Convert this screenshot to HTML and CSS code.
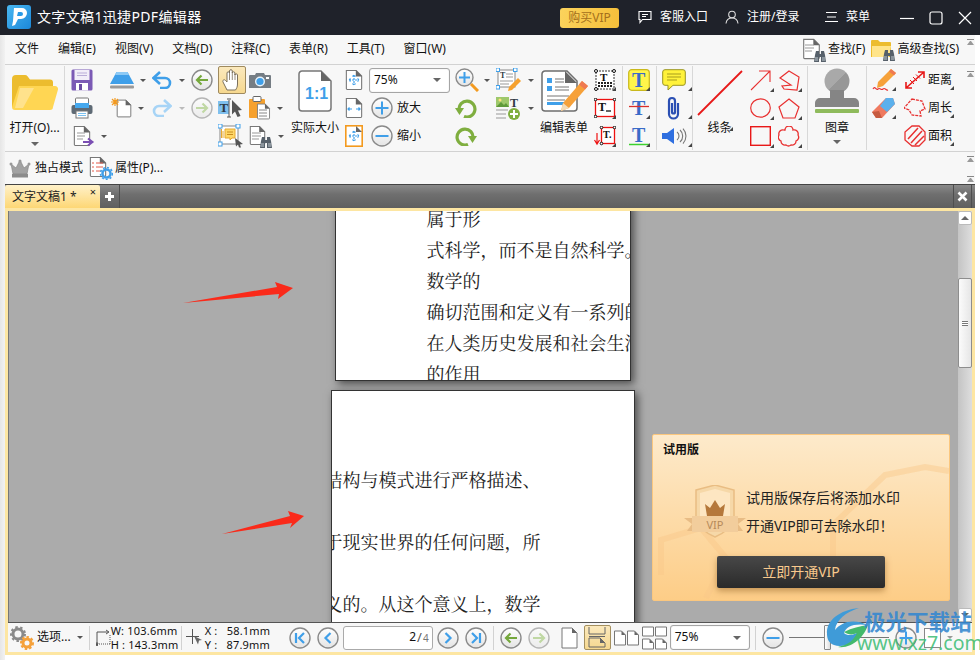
FILE: index.html
```html
<!DOCTYPE html>
<html lang="zh-CN">
<head>
<meta charset="utf-8">
<title>文字文稿1迅捷PDF编辑器</title>
<link rel="stylesheet" href="styles.css">
</head>
<body>
<svg class="sprite" width="0" height="0">
  <defs>
    <linearGradient id="rg" x1="0" y1="0" x2="0" y2="1"><stop offset="0" stop-color="#fff"/><stop offset="1" stop-color="#e4e4e4"/></linearGradient>
    <linearGradient id="stampg" x1="0" y1="0" x2="1" y2="1"><stop offset=".5" stop-color="#a9a9a9"/><stop offset=".5" stop-color="#979797"/></linearGradient>
    <symbol id="ring" viewBox="0 0 22 22"><circle cx="11" cy="11" r="10" fill="url(#rg)" stroke="#8a8a8a" stroke-width="1.4"/></symbol>
    <symbol id="page" viewBox="0 0 20 24"><path d="M1.5 1.5h11l6 6v14a1 1 0 0 1-1 1h-15a1 1 0 0 1-1-1z" fill="#fff" stroke="#777" stroke-width="1.2"/><path d="M12 1l7 7h-7z" fill="#666"/></symbol>
    <symbol id="binoc" viewBox="0 0 12 12"><path d="M1 5l1-4h3v3h2V1h3l1 4 1 7H7V7H5v5H0z" fill="#56606a"/><rect x="1" y="7" width="3" height="4" fill="#8a949c"/><rect x="8" y="7" width="3" height="4" fill="#8a949c"/></symbol>
  </defs>
</svg>

<header class="titlebar">
  <svg class="logo" width="24" height="24" viewBox="0 0 24 24"><defs><linearGradient id="lg" x1="0" y1="0" x2="1" y2="1"><stop offset="0" stop-color="#4ab8f2"/><stop offset="1" stop-color="#1b87d8"/></linearGradient></defs><rect width="24" height="24" rx="3" fill="url(#lg)"/><path d="M7 3h8a5 5 0 0 1 5 5 6 6 0 0 1-6 6h-3l-3 6-3 1 1-5z" fill="#fff"/><path d="M11 7h3a2 2 0 0 1 0 4h-4z" fill="#2a9ae6"/></svg>
  <span class="doc-title">文字文稿1迅捷PDF编辑器</span>
  <span class="vip-btn">购买VIP</span>
  <span class="tb-item tb-service"><svg width="14" height="14" viewBox="0 0 14 14"><path d="M1 1.5h12v8H4.5L2 12.5v-3H1z" fill="none" stroke="#fff" stroke-width="1.1"/><path d="M4 4.5h6M4 6.5h4" stroke="#fff"/></svg>客服入口</span>
  <span class="tb-item tb-user"><svg width="14" height="14" viewBox="0 0 14 14"><circle cx="7" cy="4.5" r="3.3" fill="none" stroke="#ddd" stroke-width="1.1"/><path d="M1 13.5c.5-4 3-5.500 6-5.500s5.500 1.500 6 5.500" fill="none" stroke="#ddd" stroke-width="1.1"/></svg>注册/登录</span>
  <span class="tb-item tb-menu"><svg width="13" height="12" viewBox="0 0 13 12"><path d="M1 1.500h11M2 6h9M0 10.500h13" stroke="#fff" stroke-width="1.100"/></svg>菜单</span>
  <span class="win-btns">
    <svg width="15" height="14" viewBox="0 0 15 14"><path d="M1 7.500h14" stroke="#fff" stroke-width="1.200"/></svg>
    <svg width="14" height="14" viewBox="0 0 14 14"><rect x="1" y="1" width="12" height="12" rx="2" fill="none" stroke="#fff" stroke-width="1.200"/></svg>
    <svg width="14" height="14" viewBox="0 0 14 14"><path d="M1 1l12 12M13 1L1 13" stroke="#fff" stroke-width="1.200"/></svg>
  </span>
</header>

<div class="app">
  <nav class="menubar">
    <span>文件</span><span>编辑(E)</span><span>视图(V)</span><span>文档(D)</span><span>注释(C)</span><span>表单(R)</span><span>工具(T)</span><span>窗口(W)</span>
    <span class="find find-first">
      <svg width="24" height="24" viewBox="0 0 24 24"><use href="#page" x="0" y="0" width="19" height="22"/><path d="M3 7h9M3 10h9M3 13h7" stroke="#999"/><use href="#binoc" x="12" y="12" width="12" height="12"/></svg>查找(F)
    </span>
    <span class="find">
      <svg width="24" height="22" viewBox="0 0 24 22"><path d="M0 2a1 1 0 0 1 1-1h6l2 2h10a1 1 0 0 1 1 1v14H0z" fill="#ecbc2e"/><path d="M1 7h19l-2 11H1z" fill="#ffe48a"/><use href="#binoc" x="12" y="10" width="12" height="12"/></svg>高级查找(S)
    </span>
    <i class="collapse"></i>
  </nav>

  <section class="ribbon">
    <div class="col c-open sep">
      <svg class="mt8" width="46" height="36" viewBox="0 0 46 36"><path d="M0 5a4 4 0 0 1 4-4h9a3 3 0 0 1 2.500 1.300L18 5.500h20a3 3 0 0 1 3 3V33H0z" fill="#ecbc2e"/><path d="M7 12h36a3 3 0 0 1 3 3.500L41 33a3 3 0 0 1-3 3H3a3 3 0 0 1-3-3z" fill="#ffd653"/><path d="M8 14h14L11 34H3z" fill="#ffe28c"/></svg>
      <span class="lbl l-open">打开(O)...</span>
      <i class="caret"></i>
    </div>

    <div class="col c-file">
      <div class="r"><svg width="22" height="22" viewBox="0 0 22 22"><rect x=".5" y=".5" width="21" height="21" rx="1.500" fill="#7b5ab5"/><rect x="3.500" y="1" width="15" height="10" fill="#f1eef8"/><path d="M6 4h10M6 6.500h10" stroke="#b9add8"/><rect x="5" y="14" width="12" height="7.500" fill="#fff"/><rect x="8" y="15" width="3" height="6" fill="#6a4ba3"/></svg></div>
      <div class="r"><svg width="22" height="22" viewBox="0 0 22 22"><rect x="4.500" y="1" width="13" height="8" rx="1" fill="#fff" stroke="#777"/><rect x="0.500" y="8" width="21" height="9" rx="2" fill="#5e6a75"/><rect x="4" y="6" width="14" height="5" fill="#45a8ee"/><rect x="5" y="14" width="12" height="7" fill="#fff" stroke="#777"/><path d="M7 16.500h8M7 18.500h8" stroke="#7cc1ef"/></svg></div>
      <div class="r r-doc"><svg width="22" height="22" viewBox="0 0 22 22"><use href="#page" x="0" y="0" width="18" height="22"/><path d="M4 8h8M4 11h8M4 14h6" stroke="#999"/><path d="M10 17h8M15 13.500l4.500 3.500-4.500 3.500" fill="none" stroke="#7b4fb3" stroke-width="2"/></svg><i class="caret s"></i></div>
    </div>

    <div class="col c-disk">
      <div class="r"><svg width="24" height="18" viewBox="0 0 24 18"><path d="M6.500 1h11L24 13H0z" fill="#3f9fe9"/><path d="M6.500 1h11l1.500 3H5z" fill="#8cc9f5"/><rect y="14.500" width="24" height="3" rx="1" fill="#9a9a9a"/></svg><i class="caret s"></i></div>
      <div class="r"><svg width="22" height="22" viewBox="0 0 22 22"><use href="#page" x="6" y="1" width="16" height="21"/><path d="M5 1v8M1 5h8M2 2l6 6M8 2L2 8" stroke="#f39a1f" stroke-width="1.200"/></svg><i class="caret s"></i></div>
    </div>

    <div class="col c-undo">
      <div class="r"><svg width="20" height="18" viewBox="0 0 20 18"><path d="M2 7h11a5 5 0 0 1 0 10H8" fill="none" stroke="#3f9fe9" stroke-width="2.600"/><path d="M8 1L1.500 7 8 13" fill="none" stroke="#3f9fe9" stroke-width="2.600"/></svg><i class="caret s c2"></i></div>
      <div class="r"><svg width="20" height="18" viewBox="0 0 20 18"><path d="M18 7H7a5 5 0 0 0 0 10h5" fill="none" stroke="#a7d4f6" stroke-width="2.600"/><path d="M12 1l6.500 6L12 13" fill="none" stroke="#a7d4f6" stroke-width="2.600"/></svg><i class="caret s c2 dim"></i></div>
    </div>

    <div class="col c-nav">
      <div class="r"><svg width="22" height="22" viewBox="0 0 22 22"><use href="#ring"/><path d="M17 11H6M10.500 6.500L6 11l4.500 4.500" fill="none" stroke="#75a83c" stroke-width="2.200"/></svg></div>
      <div class="r"><svg width="22" height="22" viewBox="0 0 22 22"><use href="#ring" opacity=".6"/><path d="M5 11h11M11.500 6.500L16 11l-4.500 4.500" fill="none" stroke="#c0d8a4" stroke-width="2.200"/></svg></div>
    </div>

    <div class="col c-hand">
      <div class="r hand-on"><svg width="20" height="24" viewBox="0 0 20 24"><path d="M5 22l-4-8c-.8-2 1.500-3 2.500-1.500L5 14V5c0-1.600 2.500-1.600 2.500 0V3c0-1.800 2.800-1.800 2.800 0v2c0-1.600 2.600-1.600 2.600 0v2c0-1.500 2.600-1.500 2.600 0v9c0 3-1 4.500-2 6z" fill="#fff" stroke="#7b705c" stroke-width="1"/><path d="M7.500 5v7M10.300 4v8M13 6v6" stroke="#7b705c" stroke-width=".8"/></svg></div>
      <div class="r"><svg width="25" height="23" viewBox="0 0 25 23"><rect y="4" width="11" height="13" fill="#7fc0ee"/><text class="svg-t" x="1.500" y="15" font-size="13">T</text><path d="M11 3v17" stroke="#555"/><path d="M9 2h4M9 20h4" stroke="#555"/><path d="M14 3l10 10-4 .5 2.500 5.500-3 1-2.500-5.500-3 3z" fill="#555"/></svg></div>
      <div class="r"><svg width="25" height="24" viewBox="0 0 25 24"><rect x="2" y="2" width="18" height="18" fill="#fff" stroke="#888"/><path d="M7 5h10v9h-3l-2 2v-2H7z" fill="#ffd868" stroke="#e6a932"/><path d="M5 7v7M3.500 5v9" stroke="#e6a932"/><path d="M9 8h6M9 10.500h6" stroke="#c88c20"/><rect x="0" y="0" width="4" height="4" fill="#fff" stroke="#3f9fe9"/><rect x="18" y="0" width="4" height="4" fill="#fff" stroke="#3f9fe9"/><rect x="0" y="18" width="4" height="4" fill="#fff" stroke="#3f9fe9"/><path d="M17 14l8 6-3 .5 1 3h-2l-1-3-2 2z" fill="#555"/></svg></div>
    </div>

    <div class="col c-cam">
      <div class="r"><svg width="22" height="17" viewBox="0 0 22 17"><path d="M1 3h5l1-2h8l1 2h5a1 1 0 0 1 1 1v12H0V4a1 1 0 0 1 1-1z" fill="#757d84"/><circle cx="11" cy="9.500" r="5" fill="#e7f3fc"/><circle cx="11" cy="9.500" r="3.600" fill="#3f9fe9"/><rect x="17" y="5" width="3" height="2" fill="#fff"/></svg></div>
      <div class="r"><svg width="22" height="24" viewBox="0 0 22 24"><rect y="3" width="16" height="19" rx="1" fill="#f6a12e"/><rect x="4" y="0.500" width="8" height="5" rx="1" fill="#fff" stroke="#666"/><use href="#page" x="7" y="7" width="15" height="17"/><path d="M10 14h8M10 17h8M10 20h8" stroke="#888"/></svg><i class="caret s"></i></div>
      <div class="r"><svg width="23" height="23" viewBox="0 0 23 23"><use href="#page" x="0" y="0" width="17" height="21"/><path d="M3 8h9M3 11h9M3 14h7" stroke="#999"/><use href="#binoc" x="11" y="11" width="12" height="12"/></svg><i class="caret s"></i></div>
    </div>

    <div class="col c-tall c-actual">
      <svg class="mt5" width="34" height="42" viewBox="0 0 34 42"><path d="M4 1h19l10 10v27a3 3 0 0 1-3 3H4a3 3 0 0 1-3-3V4a3 3 0 0 1 3-3z" fill="#fff" stroke="#777" stroke-width="1.500"/><path d="M23 1l10 10H23z" fill="#666"/><text class="svg-one" x="7" y="29" font-size="16">1:1</text></svg>
      <span class="lbl">实际大小</span>
    </div>

    <div class="col c-fit">
      <div class="r"><svg width="18" height="22" viewBox="0 0 18 22"><use href="#page" width="18" height="22"/><path d="M9 6v10M4 11h10M7.500 7.500L9 6l1.500 1.500M7.500 14.500L9 16l1.500-1.500M5.500 9.500L4 11l1.500 1.500M12.500 9.500L14 11l-1.500 1.500" fill="none" stroke="#3f9fe9" stroke-width="1.200" stroke-dasharray="2 1"/></svg></div>
      <div class="r"><svg width="18" height="22" viewBox="0 0 18 22"><use href="#page" width="18" height="22"/><path d="M3 12h4M11 12h4M4.500 10.500L3 12l1.500 1.500M13.500 10.500L15 12l-1.500 1.500" fill="none" stroke="#3f9fe9" stroke-width="1.200"/></svg></div>
      <div class="r"><svg width="18" height="22" viewBox="0 0 18 22"><rect x=".8" y=".8" width="16.400" height="20.400" fill="#fff" stroke="#f39a1f" stroke-width="1.600"/><path d="M11 1l6 6h-6z" fill="#666"/><path d="M9 6v10M4 11h10M7.500 7.500L9 6l1.500 1.500M7.500 14.500L9 16l1.500-1.500M5.500 9.500L4 11l1.500 1.500M12.500 9.500L14 11l-1.500 1.500" fill="none" stroke="#3f9fe9" stroke-width="1.200" stroke-dasharray="2 1"/></svg></div>
    </div>

    <div class="col c-zoom">
      <div class="r"><span class="combo combo-top">75%<i class="caret"></i></span></div>
      <div class="r lblrow"><svg width="22" height="22" viewBox="0 0 22 22"><use href="#ring"/><path d="M11 4.500v13M4.500 11h13" stroke="#3f9fe9" stroke-width="2"/></svg>放大</div>
      <div class="r lblrow"><svg width="22" height="22" viewBox="0 0 22 22"><use href="#ring"/><path d="M4.500 11h13" stroke="#3f9fe9" stroke-width="2"/></svg>缩小</div>
    </div>

    <div class="col c-mag">
      <div class="r"><svg width="24" height="24" viewBox="0 0 24 24"><circle cx="9.500" cy="9.500" r="8.500" fill="url(#rg)" stroke="#8a8a8a" stroke-width="1.400"/><path d="M9.500 4v11M4 9.500h11" stroke="#3f9fe9" stroke-width="2"/><path d="M16 16l7 7" stroke="#f39a1f" stroke-width="3"/></svg><i class="caret s"></i></div>
      <div class="r"><svg width="22" height="20" viewBox="0 0 22 20"><path d="M4 12a8 8 0 1 1 5 6.500" fill="none" stroke="#7fae3f" stroke-width="3.200"/><path d="M0 10h9l-4.500 7z" fill="#7fae3f"/></svg></div>
      <div class="r"><svg width="22" height="20" viewBox="0 0 22 20"><path d="M18 12a8 8 0 1 0-5 6.500" fill="none" stroke="#7fae3f" stroke-width="3.200"/><path d="M22 10h-9l4.500 7z" fill="#7fae3f"/></svg></div>
    </div>

    <div class="col c-ins">
      <div class="r"><svg width="26" height="24" viewBox="0 0 26 24"><rect x="2" y="2" width="17" height="17" fill="#fff" stroke="#888"/><text class="svg-t" x="4" y="10" font-size="8">T</text><path d="M10 6h7M10 9h7M4 13h13M4 16h9" stroke="#999"/><rect x="0" y="0" width="3.500" height="3.500" fill="#fff" stroke="#3f9fe9"/><rect x="17.500" y="0" width="3.500" height="3.500" fill="#fff" stroke="#3f9fe9"/><rect x="0" y="17.500" width="3.500" height="3.500" fill="#fff" stroke="#3f9fe9"/><path d="M22 10l3 3-9 9-4 1 1-4z" fill="#f6a12e"/></svg><i class="caret s"></i></div>
      <div class="r"><svg width="26" height="24" viewBox="0 0 26 24"><rect y="1" width="13" height="10" fill="#9ec86b"/><path d="M0 11l5-5 3 3 2-2 3 4z" fill="#5f9a3a"/><circle cx="4" cy="4" r="1.500" fill="#ffe27a"/><text class="svg-t" x="14" y="11" font-size="12">T</text><path d="M0 14h12M0 18h10M0 22h10" stroke="#999"/><circle cx="18" cy="18" r="6" fill="#7fae3f"/><path d="M18 14v8M14 18h8" stroke="#fff" stroke-width="2"/></svg><i class="caret s"></i></div>
    </div>

    <div class="col c-tall c-form">
      <svg class="mt5" width="47" height="42" viewBox="0 0 47 42"><path d="M4 1h22l10 10v27a3 3 0 0 1-3 3H4a3 3 0 0 1-3-3V4a3 3 0 0 1 3-3z" fill="#fff" stroke="#6e6e6e" stroke-width="1.500"/><path d="M24 1l12 12H24z" fill="#666"/><rect x="6" y="8" width="5" height="5" fill="#3f9fe9"/><rect x="6" y="16" width="5" height="5" fill="#3f9fe9"/><path d="M14 9h9M14 12h9M14 17h14M14 20h14M6 26h22M6 30h18" stroke="#777" stroke-width="1.200"/><rect x="6" y="32" width="17" height="3" fill="#3f9fe9"/><path d="M41 11l6 5-19 22-8 3 2-8z" fill="#f6a13a"/><path d="M41 11l6 5-3 3.500-6-5z" fill="#ef7a52"/><path d="M22 33l6 5-8 3z" fill="#f4dcb8"/></svg>
      <span class="lbl">编辑表单</span>
    </div>

    <div class="col c-field sep">
      <div class="r cor"><svg width="22" height="22" viewBox="0 0 22 22"><rect x="2" y="2" width="18" height="18" fill="#fff" stroke="#333" stroke-dasharray="2 1"/><text class="svg-k" x="6" y="12" font-size="11">T</text><path d="M4 14h14M4 17h14" stroke="#222" stroke-width="2" stroke-dasharray="2 1"/><g fill="#fff" stroke="#111"><circle cx="2" cy="2" r="1.500"/><circle cx="20" cy="2" r="1.500"/><circle cx="2" cy="20" r="1.500"/></g></svg></div>
      <div class="r cor"><svg width="22" height="20" viewBox="0 0 22 20"><rect x="1.500" y="1.500" width="19" height="17" fill="#fff" stroke="#e11" stroke-width="1.300"/><text class="svg-k" x="4" y="13" font-size="12">T</text><path d="M12 13h5" stroke="#111" stroke-width="1.300"/><g fill="#fff" stroke="#111"><circle cx="1.500" cy="1.500" r="1.300"/><circle cx="20.500" cy="1.500" r="1.300"/><circle cx="1.500" cy="18.500" r="1.300"/></g></svg></div>
      <div class="r cor"><svg width="22" height="20" viewBox="0 0 22 20"><rect x="7.500" y="1.500" width="13" height="16" fill="#fff" stroke="#e11" stroke-width="1.300"/><text class="svg-k" x="9" y="12" font-size="10">T.</text><path d="M3 7v11M0.500 14L3 18l2.500-4" fill="none" stroke="#e11" stroke-width="1.200"/><g fill="#fff" stroke="#111"><circle cx="7.500" cy="1.500" r="1.300"/><circle cx="20.500" cy="1.500" r="1.300"/><circle cx="7.500" cy="17.500" r="1.300"/></g></svg></div>
    </div>

    <div class="col c-t sep">
      <div class="r cor"><svg width="22" height="22" viewBox="0 0 22 22"><rect x=".7" y=".7" width="20.600" height="20.600" rx="3" fill="#fff54a" stroke="#c9b81c" stroke-width="1.200"/><text class="svg-bt" x="4" y="18" font-size="20">T</text></svg></div>
      <div class="r cor"><svg width="22" height="20" viewBox="0 0 22 20"><text class="svg-bt" x="4" y="17" font-size="20">T</text><path d="M1 8.500h20" stroke="#d9302a" stroke-width="1.300"/></svg></div>
      <div class="r cor"><svg width="22" height="20" viewBox="0 0 22 20"><text class="svg-bt" x="4" y="16" font-size="20">T</text><path d="M1 18.500h20" stroke="#3cd12e" stroke-width="1.500"/></svg></div>
    </div>

    <div class="col c-note sep">
      <div class="r cor"><svg width="24" height="22" viewBox="0 0 24 22"><path d="M3 .7h18a2.300 2.300 0 0 1 2.300 2.300v11a2.300 2.300 0 0 1-2.300 2.300H11L6 21v-4.700H3A2.300 2.300 0 0 1 .7 14V3A2.300 2.300 0 0 1 3 .7z" fill="#fff23a" stroke="#9a9520" stroke-width="1"/><path d="M5 5h14M5 8h14M5 11h10" stroke="#a79d1c"/></svg></div>
      <div class="r cor"><svg width="14" height="24" viewBox="0 0 14 24"><path d="M11 7v11a4.500 4.500 0 0 1-9 0V5a3 3 0 0 1 6 0v11a1.500 1.500 0 0 1-3 0V7" fill="none" stroke="#2b4fb3" stroke-width="2.200"/></svg></div>
      <div class="r cor"><svg width="25" height="16" viewBox="0 0 25 16"><path d="M0 5h5l7-5v16l-7-5H0z" fill="#2f6fe0"/><path d="M15 4a5 5 0 0 1 0 8M18 2a8 8 0 0 1 0 12M21 0.500a11 11 0 0 1 0 15" fill="none" stroke="#777" stroke-width="1.100"/></svg></div>
    </div>

    <div class="col c-tall c-line">
      <svg class="mt5" width="46" height="46" viewBox="0 0 46 46"><path d="M1 45L45 1" stroke="#e81818" stroke-width="1.800"/></svg>
      <span class="lbl l-line">线条</span><i class="corner c-line-mark"></i>
    </div>

    <div class="col c-s1">
      <div class="r cor"><svg width="21" height="21" viewBox="0 0 21 21"><path d="M1 20L20 1M9 1h11v11" fill="none" stroke="#e83030" stroke-width="1.100"/></svg></div>
      <div class="r cor"><svg width="21" height="20" viewBox="0 0 21 20"><ellipse cx="10.500" cy="10" rx="9.800" ry="9.200" fill="none" stroke="#e83030" stroke-width="1.200"/></svg></div>
      <div class="r cor"><svg width="21" height="20" viewBox="0 0 21 20"><rect x=".7" y=".7" width="19.600" height="18.600" fill="none" stroke="#e81818" stroke-width="1.400"/></svg></div>
    </div>

    <div class="col c-s2 sep">
      <div class="r cor"><svg width="22" height="21" viewBox="0 0 22 21"><path d="M11 1l10 6-2 13-13-1-2-3 9-1-11-7z" fill="none" stroke="#e83030" stroke-width="1.200"/></svg></div>
      <div class="r cor"><svg width="22" height="21" viewBox="0 0 22 21"><path d="M11 1l10 8-4 11H5L1 9z" fill="none" stroke="#e83030" stroke-width="1.200"/></svg></div>
      <div class="r cor"><svg width="22" height="21" viewBox="0 0 22 21"><path d="M7 4a4 4 0 0 1 8 0 4 4 0 0 1 5 5 4 4 0 0 1-2 6 4 4 0 0 1-5 4 4 4 0 0 1-5 0 4 4 0 0 1-5-4 4 4 0 0 1-2-6 4 4 0 0 1 5-5z" fill="none" stroke="#e83030" stroke-width="1.300"/></svg></div>
    </div>

    <div class="col c-tall c-stamp sep">
      <svg class="mt3" width="46" height="46" viewBox="0 0 46 46"><circle cx="23" cy="13" r="12.500" fill="url(#stampg)"/><path d="M16 22h14v8h10a5 5 0 0 1 5 5v4H1v-4a5 5 0 0 1 5-5h10z" fill="#858585"/><rect x="1" y="41" width="44" height="4" rx="1" fill="#8fbb5c"/></svg>
      <span class="lbl l-stamp">图章</span>
      <i class="caret"></i>
    </div>

    <div class="col c-m1">
      <div class="r cor"><svg width="24" height="24" viewBox="0 0 24 24"><path d="M19 1l5 4-13 13-6 2 1-6z" fill="#f6a13a"/><path d="M19 1l5 4-2 2.500-5-4z" fill="#ef7a52"/><path d="M1 21c2-4 3 2 5 0s3 2 5 0 3 2 5 1" fill="none" stroke="#e83030" stroke-width="1.100"/></svg></div>
      <div class="r cor"><svg width="23" height="22" viewBox="0 0 23 22"><path d="M14 1h7l2 6-13 14H4l-4-6z" fill="#ef7a60"/><path d="M14 1h7l2 6-8 8-7-6z" fill="#5bb0ec"/><path d="M0 15l4 6h6l-3-7z" fill="#c65b40"/></svg></div>
    </div>

    <div class="col c-m2">
      <div class="r lblrow cor"><svg width="22" height="20" viewBox="0 0 22 20"><path d="M2 18L20 2M14 2h6v6M2 12v6h6" fill="none" stroke="#e81818" stroke-width="1.600"/><path d="M6 10l4 4M9 7l4 4M12 4.500l4 4" stroke="#e81818"/></svg>距离</div>
      <div class="r lblrow cor"><svg width="22" height="20" viewBox="0 0 22 20"><path d="M8 1l10 2 3 8-5 2 1 5-9-1-3-5-5-2z" fill="none" stroke="#e83030" stroke-width="1.300" stroke-dasharray="3 1"/></svg>周长</div>
      <div class="r lblrow cor"><svg width="22" height="22" viewBox="0 0 22 22"><path d="M8 1h7l6 6v8l-6 6H8l-7-6V7z" fill="none" stroke="#e83030" stroke-width="1.300"/><path d="M4 14L14 3M7 18L18 6M11 20l9-9" stroke="#e83030" stroke-width="1.500"/></svg>面积</div>
    </div>
    <i class="collapse"></i>
  </section>

  <div class="modebar">
    <svg width="22" height="19" viewBox="0 0 22 19"><path d="M2 5l5 4 4-8 4 8 5-4-2 10H4z" fill="#a2a2a2" stroke="#7f7f7f" stroke-width=".6"/><rect x="3" y="15" width="16" height="3.500" fill="#8b8b8b"/><circle cx="11" cy="2" r="1.500" fill="#999"/><circle cx="2" cy="5" r="1.500" fill="#999"/><circle cx="20" cy="5" r="1.500" fill="#999"/></svg>
    <span>独占模式</span>
    <svg width="24" height="24" viewBox="0 0 24 24"><use href="#page" width="18" height="22"/><path d="M3 7h2M7 7h7M3 11h2M7 11h7M3 15h2M7 15h5" stroke="#e25a4a"/><circle cx="17.500" cy="17.500" r="4" fill="none" stroke="#3f9fe9" stroke-width="2.500"/><circle cx="17.500" cy="17.500" r="6" fill="none" stroke="#3f9fe9" stroke-width="1.600" stroke-dasharray="2 2"/></svg>
    <span>属性(P)...</span>
    <span class="mode-cols"><i class="collapse"></i><i class="collapse"></i></span>
  </div>

  <div class="tabbar">
    <div class="tab">文字文稿1 *<span class="tab-x">×</span></div>
    <div class="tab-add"><svg width="11" height="11" viewBox="0 0 11 11"><path d="M5.500 1v9M1 5.500h9" stroke="#fff" stroke-width="3"/></svg></div>
    <div class="tab-close"><svg width="11" height="11" viewBox="0 0 11 11"><path d="M1.500 1.500l8 8M9.500 1.500l-8 8" stroke="#fff" stroke-width="2.600"/></svg></div>
  </div>

  <main class="frame">
    <div class="viewer-row">
      <div class="viewer">
        <article class="pg pg1">
          <p>属于形</p><p>式科学，而不是自然科学。</p><p>数学的</p><p>确切范围和定义有一系列的</p><p>在人类历史发展和社会生活</p><p>的作用</p>
        </article>
        <article class="pg pg2">
          <p>结构与模式进行严格描述、</p><p>于现实世界的任何问题，所</p><p>义的。从这个意义上，数学</p>
        </article>
        <svg class="arrows" width="320" height="340" viewBox="0 0 320 340"><path d="M174 92L268 76L266 71L284 77L269 88L270 83z" fill="#fa2a1a"/><path d="M213 323L281 305L279 300L295 305L281 317L283 312z" fill="#fa2a1a"/></svg>
        <aside class="trial">
          <svg class="trial-bg" width="296" height="165" viewBox="0 0 296 165"><path d="M180 130l0-40 52-50 40-8 24 4M8 140v-35l40-12 25 30-20 40" fill="none" stroke="#f9c88a" stroke-width="6" opacity=".45"/></svg>
          <h2 class="trial-h">试用版</h2>
          <div class="trial-body">
            <svg width="62" height="58" viewBox="0 0 62 58"><path d="M12 5l19-5 19 5v28c0 8-10 15-19 19-9-4-19-11-19-19z" fill="#f6d8a8" stroke="#e9bd83" stroke-width="1.500"/><path d="M16 8l15-4 15 4v24c0 6-8 12-15 15-7-3-15-9-15-15z" fill="#fde6c2"/><path d="M21 19l5 4 5-8 5 8 5-4-2 12H23z" fill="#b5783b"/><path d="M0 33h62l-8 6 5 7H3l5-7z" fill="#e8bc85"/><path d="M8 31h46v16H8z" fill="#f2cd9c"/><text class="vip-mini" x="31" y="44" font-size="11" text-anchor="middle">VIP</text></svg>
            <div class="trial-msg"><p>试用版保存后将添加水印</p><p>开通VIP即可去除水印！</p></div>
          </div>
          <span class="trial-btn">立即开通VIP</span>
        </aside>
      </div>
      <div class="scroll">
        <i class="sb-btn up"></i>
        <div class="sb-thumb"><b></b></div>
        <div class="sb-rest"></div>
        <i class="sb-btn down"></i>
      </div>
    </div>

    <footer class="status">
      <svg class="st-gear" width="24" height="24" viewBox="0 0 24 24"><circle cx="8" cy="8" r="5" fill="none" stroke="#8a8a8a" stroke-width="3"/><circle cx="8" cy="8" r="7" fill="none" stroke="#8a8a8a" stroke-width="2" stroke-dasharray="2.500 2.500"/><circle cx="17" cy="17" r="4" fill="none" stroke="#f5a13a" stroke-width="3"/><circle cx="17" cy="17" r="6" fill="none" stroke="#f5a13a" stroke-width="2" stroke-dasharray="2.500 2"/></svg>
      <span class="st-opt">选项...</span><i class="caret s st-car"></i>
      <i class="st-sep s1"></i>
      <svg class="st-size" width="15" height="18" viewBox="0 0 15 18"><path d="M1 17V3h11M10 1l3 2-3 2M1 17l-1-3h2z" fill="none" stroke="#555"/><path d="M3 15h11M14 15V5" stroke="#555" stroke-dasharray="1 1"/></svg>
      <div class="st-dim"><span>W:&nbsp;103.6mm</span><span>H :&nbsp;143.3mm</span></div>
      <i class="st-sep s2"></i>
      <svg class="st-cross" width="17" height="17" viewBox="0 0 17 17"><path d="M0 7.500h13M6.500 0v15" stroke="#555"/><path d="M8 7l8 4-3 .5-1 4z" fill="#666"/></svg>
      <div class="st-pos"><span>X :&nbsp;&nbsp;&nbsp;58.1mm</span><span>Y :&nbsp;&nbsp;&nbsp;87.9mm</span></div>
      <svg class="nav-first" width="22" height="22" viewBox="0 0 22 22"><use href="#ring"/><path d="M7 6v10M15 6l-5 5 5 5" fill="none" stroke="#3f9fe9" stroke-width="2.200"/></svg>
      <svg class="nav-g6" width="22" height="22" viewBox="0 0 22 22"><use href="#ring"/><path d="M13.500 6l-5 5 5 5" fill="none" stroke="#3f9fe9" stroke-width="2.200"/></svg>
      <div class="page-box"><span class="pn">2</span><span class="ps">/</span><span class="pt">4</span></div>
      <svg class="nav-g4" width="22" height="22" viewBox="0 0 22 22"><use href="#ring"/><path d="M8.500 6l5 5-5 5" fill="none" stroke="#3f9fe9" stroke-width="2.200"/></svg>
      <svg class="nav-g6" width="22" height="22" viewBox="0 0 22 22"><use href="#ring"/><path d="M15 6v10M7 6l5 5-5 5" fill="none" stroke="#3f9fe9" stroke-width="2.200"/></svg>
      <i class="st-sep s3"></i>
      <svg class="nav-back" width="22" height="22" viewBox="0 0 22 22"><use href="#ring"/><path d="M17 11H6M10.500 6.500L6 11l4.500 4.500" fill="none" stroke="#75a83c" stroke-width="2.200"/></svg>
      <svg class="nav-g6" width="22" height="22" viewBox="0 0 22 22"><use href="#ring" opacity=".6"/><path d="M5 11h11M11.500 6.500L16 11l-4.500 4.500" fill="none" stroke="#c0d8a4" stroke-width="2.200"/></svg>
      <svg class="v-single" width="17" height="22" viewBox="0 0 17 22"><path d="M1 1h10l5 5v15H1z" fill="#fff" stroke="#777"/><path d="M11 1l5 5h-5z" fill="#666"/></svg>
      <span class="v-on"><svg width="18" height="21" viewBox="0 0 18 21"><path d="M1 0v7h16V0M1 20v-9h11l5 5v4z" fill="none" stroke="#666"/><path d="M1 9.500h16" stroke="#666"/><path d="M12 11l5 5h-5z" fill="#666"/></svg></span>
      <svg class="v-two" width="25" height="16" viewBox="0 0 25 16"><path d="M.5 1h7l4 4v10H.5zM13.500 1h7l4 4v10h-11z" fill="#fff" stroke="#777"/><path d="M7.500 1l4 4h-4zM20.500 1l4 4h-4z" fill="#666"/></svg>
      <svg class="v-four" width="25" height="24" viewBox="0 0 25 24"><path d="M.5 1h11v9H.5zM13.500 1h11v9h-11zM.5 13h7l4 4v6h-11zM13.500 13h7l4 4v6h-11z" fill="#fff" stroke="#777"/><path d="M7.500 13l4 4h-4zM20.500 13l4 4h-4z" fill="#666"/></svg>
      <span class="combo combo-st">75%<i class="caret"></i></span>
      <i class="st-sep s4"></i>
      <svg class="z-minus" width="22" height="22" viewBox="0 0 22 22"><use href="#ring"/><path d="M4.500 11h13" stroke="#3f9fe9" stroke-width="2"/></svg>
      <div class="slider"><b></b></div>
      <svg class="z-plus" width="22" height="22" viewBox="0 0 22 22"><use href="#ring"/><path d="M11 4.500v13M4.500 11h13" stroke="#3f9fe9" stroke-width="2"/></svg>
      <svg class="z-page" width="17" height="20" viewBox="0 0 17 20"><rect x=".5" y=".5" width="16" height="19" fill="#fff" stroke="#888"/></svg>
      <i class="caret s z-car"></i>
    </footer>
  </main>
</div>

<div class="mark">
  <svg class="mark-logo" width="44" height="44" viewBox="0 0 44 44"><path d="M3 26C2 12 16 2 35 0 22 4 12 12 11 22c6-8 18-12 33-5-14-2-22 1-24 8 4 4 12 2 18-4-3 12-18 20-28 16C5 35 3 31 3 26z" fill="#3f9bd8"/><path d="M20 24c8-4 16-6 24-7-4 12-16 24-30 22 10-2 16-7 19-14-4 2-9 2-13-1z" fill="#43b96c"/></svg>
  <div class="mark-txt"><span class="mark-cn">极光下载站</span><span class="mark-en">www.xz7.com</span></div>
</div>
</body>
</html>
```

FILE: styles.css
```css
* { box-sizing: border-box; }
html, body { margin: 0; padding: 0; }
body {
  width: 980px;
  height: 660px;
  overflow: hidden;
  position: relative;
  background: linear-gradient(90deg, #e6e6e6 0, #f2f2f2 5px, #fff 5px);
  font: 12px/1.2 "Noto Sans", "Noto Sans CJK SC", sans-serif;
  color: #111;
}
i { display: block; font-style: normal; }
p, h2 { margin: 0; }
svg { display: block; flex: none; }
.sprite { position: absolute; }
.svg-t { font-family: "Liberation Serif", serif; font-weight: 700; fill: #2f3a44; }
.svg-k { font-family: "Liberation Serif", serif; font-weight: 700; fill: #111; }
.svg-bt { font-family: "Liberation Serif", serif; font-weight: 700; fill: #3a6bc8; }
.svg-one { font-family: "Liberation Sans", sans-serif; font-weight: 700; fill: #3f9fe9; }

.titlebar {
  height: 35px;
  background: #1f222a;
  display: flex;
  align-items: center;
  color: #fff;
  padding-left: 7px;
}
.logo { margin-right: 6px; margin-top: -1px; }
.doc-title { font-size: 14px; width: 166px; letter-spacing: .35px; margin-right: 357px; white-space: nowrap; }
.vip-btn {
  width: 59px; height: 20px;
  background: linear-gradient(100deg, #fbd35c, #f5bf3a);
  border-radius: 3px;
  color: #a4701c;
  text-align: center;
  line-height: 20px;
  font-size: 12px;
}
.tb-item { display: flex; align-items: center; gap: 8px; white-space: nowrap; font-size: 12px; }
.tb-service { margin-left: 19px; width: 87px; }
.tb-user { width: 100px; }
.tb-menu { gap: 8px; width: 74px; }
.win-btns { display: flex; gap: 15px; align-items: center; }

.app { margin-left: 5px; width: 970px; }

.menubar {
  height: 30px;
  background: #f7f7f7;
  border-bottom: 1px solid #d2d2d2;
  display: flex;
  align-items: center;
  gap: 19px;
  padding-left: 10px;
  position: relative;
}
.find { display: flex; align-items: center; gap: 2px; white-space: nowrap; margin-left: -13px; }
.find-first { margin-left: 337px; }
.collapse {
  width: 7px; height: 7px;
  border-top: 1px solid #888;
  position: absolute;
  right: 1px; top: 4px;
}
.collapse::after {
  content: "";
  display: block;
  margin-top: 1px;
  border: 3.500px solid transparent;
  border-top: 0;
  border-bottom: 4px solid #999;
}

.ribbon {
  height: 87px;
  background: #f7f7f7;
  border-bottom: 1px solid #d2d2d2;
  display: flex;
  padding-top: 1px;
  position: relative;
}
.col { display: flex; flex-direction: column; height: 84px; position: relative; }
.sep { border-right: 1px solid #d8d8d8; }
.r { height: 28px; display: flex; align-items: center; position: relative; }
.c-tall { align-items: center; }
.mt3 { margin-top: 2px; }
.mt5 { margin-top: 4px; }
.mt8 { margin-top: 8px; }
.lbl { white-space: nowrap; line-height: 16px; margin-top: 8px; font-size: 12px; }
.l-open { margin-top: 10px; font-size: 12px; }
.l-stamp { margin-top: 6px; }
.caret {
  width: 0; height: 0;
  border: 4px solid transparent;
  border-bottom: 0;
  border-top: 4px solid #666;
}
.caret.s { border-width: 3px 3px 0; border-top-color: #555; margin-left: 6px; }
.caret.c2 { margin-left: 7px; }
.caret.dim { border-top-color: #bbb; }

.c-open { width: 60px; align-items: center; }
.c-open .caret { margin-top: 6px; }
.c-file { width: 40px; padding-left: 6px; }
.r-doc svg { margin-left: 2px; }
.c-disk { width: 42px; padding-left: 5px; }
.c-undo { width: 40px; padding-left: 5px; }
.c-nav { width: 29px; padding-left: 4px; }
.c-hand { width: 32px; padding-left: 2px; }
.hand-on {
  width: 28px; height: 28px;
  background: linear-gradient(#fbe9bd, #f6d88f);
  border: 1px solid #9f8a5e;
  border-radius: 2px;
  justify-content: center;
}
.c-cam { width: 40px; padding-left: 1px; }
.c-actual { width: 54px; }
.c-fit { width: 24px; padding-left: 3px; }
.c-zoom { width: 87px; padding-left: 3px; }
.combo {
  display: flex; align-items: center; justify-content: space-between;
  background: #fff;
  border: 1px solid #a5a5a5;
  border-radius: 3px;
  font-size: 12px;
  padding: 0 8px 0 4px;
  box-shadow: inset 0 0 1px #bbb;
}
.combo-top { width: 81px; height: 25px; }
.lblrow { gap: 4px; padding-left: 2px; white-space: nowrap; }
.c-mag { width: 40px; padding-left: 2px; }
.c-mag .caret.s { margin-left: 5px; }
.c-ins { width: 44px; padding-left: 3px; }
.c-form { width: 54px; }
.c-field { width: 32px; padding-left: 3px; }
.c-t { width: 34px; padding-left: 5px; }
.c-note { width: 36px; padding-left: 5px; align-items: flex-start; }
.c-note .r { width: 30px; }
.c-note .r:nth-child(2) { padding-left: 5px; }
.c-line { width: 54px; }
.l-line { margin-top: 4px; margin-left: -1px; }
.c-s1 { width: 29px; padding-left: 3px; }
.c-s2 { width: 32px; padding-left: 2px; }
.c-stamp { width: 59px; }
.c-stamp .caret { margin-top: 4px; }
.c-m1 { width: 30px; padding-left: 5px; }
.c-m2 { width: 70px; padding-left: 5px; }
.lblrow.cor { gap: 2px; }
.cor::after, .corner {
  content: "";
  display: block;
  position: absolute;
  width: 0; height: 0;
  border-left: 4px solid transparent;
  border-bottom: 4px solid #444;
  right: 0; bottom: 3px;
}
.c-field .cor::after { right: 6px; }
.c-t .cor::after { right: 6px; }
.c-note .cor::after { right: 0; }
.c-s1 .cor::after { right: 2px; bottom: 2px; }
.c-s2 .cor::after { right: 5px; bottom: 2px; }
.c-m1 .cor::after { right: 1px; }
.c-m2 .cor::after { right: 13px; bottom: 4px; }
.c-line-mark { left: 36px; bottom: 19px; right: auto; }
.ribbon > .collapse { top: 6px; }

.modebar {
  height: 32px;
  background: #f7f7f7;
  display: flex;
  align-items: center;
  padding-left: 4px;
  position: relative;
}
.modebar span { white-space: nowrap; }
.modebar svg:first-child { margin-right: 4px; }
.modebar svg:nth-of-type(2) { margin: 0 2px 0 6px; }
.mode-cols .collapse:first-child { top: 4px; }
.mode-cols .collapse:last-child { top: 24px; }

.tabbar {
  height: 24px;
  background: linear-gradient(#8a8a8a 0, #6f6f6f 40%, #5f5f5f 100%);
  border-top: 1px solid #444;
  display: flex;
  align-items: stretch;
}
.tab {
  width: 95px;
  background: linear-gradient(#fff1c9, #fdd775);
  border-radius: 2px 2px 0 0;
  padding: 2px 0 0 7px;
  line-height: 20px;
  position: relative;
  white-space: nowrap;
  color: #222;
}
.tab-x { position: absolute; right: 4px; top: -3px; font-size: 11px; color: #222; }
.tab-add {
  width: 20px;
  display: flex; align-items: center; justify-content: center;
  border-right: 1px solid #4e4e4e;
}
.tab-close {
  width: 19px;
  margin-left: auto;
  margin-right: 3px;
  display: flex; align-items: center; justify-content: center;
  border-left: 1px solid #4e4e4e;
  border-right: 1px solid #4e4e4e;
}

.frame {
  height: 447px;
  border: 3px solid #fde6a2;
  background: #fff;
  display: flex;
  flex-direction: column;
}
.viewer-row { height: 411px; display: flex; }
.viewer {
  width: 950px;
  background: #ababab;
  border-left: 1px solid #777;
  padding-right: 2px;
  position: relative;
  overflow: hidden;
  display: flex;
  flex-direction: column;
  align-items: center;
}
.pg {
  background: #fff;
  border: 1px solid #333;
  box-shadow: 3px 3px 8px rgba(0, 0, 0, .55);
  overflow: hidden;
  font: 18px/31px "Noto Serif CJK SC", "Noto Sans CJK SC", serif;
  color: #222;
  flex: none;
  white-space: nowrap;
}
.pg1 { width: 296px; height: 178px; border-top: 0; padding: 0 0 0 91px; margin-top: -8px; }
.pg1 p { height: 31px; }
.pg2 { width: 304px; height: 300px; margin-top: 9px; padding: 73px 0 0 0; }
.pg2 p { margin: 0 0 31px -7px; height: 31px; }
.arrows { position: absolute; left: 0; top: 0; }

.trial {
  position: absolute;
  left: 643px; top: 223px;
  width: 298px; height: 167px;
  border: 1px solid #fbc77e;
  border-radius: 2px;
  background: linear-gradient(#fdeacb, #fdcd87);
  overflow: hidden;
}
.trial-bg { position: absolute; left: 0; top: 0; }
.trial-h { position: absolute; left: 10px; top: 8px; font-size: 12px; font-weight: 700; }
.trial-body { position: absolute; left: 31px; top: 50px; display: flex; gap: 0; }
.trial-msg { font-size: 14px; color: #222; line-height: 28px; margin-top: -1px; white-space: nowrap; }
.vip-mini { fill: #b58a5a; font-family: "Noto Sans", sans-serif; }
.trial-btn {
  position: absolute;
  left: 64px; top: 121px;
  width: 168px; height: 32px;
  background: linear-gradient(#484848, #2a2a2a);
  color: #f8c98d;
  text-align: center;
  line-height: 32px;
  font-size: 14px;
  border-radius: 2px;
  box-shadow: 0 3px 6px rgba(140, 90, 30, .5);
}

.scroll {
  width: 14px;
  background: linear-gradient(90deg, #c4c4c4, #dedede);
  display: flex;
  flex-direction: column;
}
.sb-btn {
  height: 14px; flex: none;
  background: #fff;
  border: 1px solid #bbb;
  border-radius: 2px;
  display: flex; align-items: center; justify-content: center;
}
.sb-btn.up::after { content: ""; border: 4px solid transparent; border-top: 0; border-bottom: 4px solid #666; }
.sb-btn.down::after { content: ""; border: 4px solid transparent; border-bottom: 0; border-top: 4px solid #666; }
.sb-thumb {
  height: 90px; margin-top: 53px; flex: none;
  background: linear-gradient(90deg, #fbfbfb, #e6e6e6);
  border: 1px solid #8d8d8d;
  border-radius: 2px;
  display: flex; align-items: center; justify-content: center;
}
.sb-thumb b { width: 6px; height: 5px; border-top: 1px solid #777; border-bottom: 1px solid #777; background: linear-gradient(#fff 40%, #777 40% 60%, #fff 60%); }
.sb-rest { flex: 1; }

.status {
  height: 30px;
  background: #f7f7f7;
  border-top: 1px solid #555;
  display: flex;
  align-items: center;
  padding-left: 2px;
  font-size: 11px;
}
.st-opt { margin-left: 3px; font-size: 12px; white-space: nowrap; }
.st-car { margin-left: 6px; }
.st-sep { width: 1px; height: 24px; background: #d2d2d2; flex: none; }
.s1 { margin-left: 6px; }
.st-size { margin-left: 6px; }
.st-dim, .st-pos { display: flex; flex-direction: column; line-height: 14px; letter-spacing: .2px; white-space: nowrap; }
.st-dim { width: 70px; }
.st-cross { margin-left: 4px; }
.st-pos { width: 84px; margin-left: 2px; }
.nav-g6 { margin-left: 6px; }
.nav-g4 { margin-left: 4px; }
.page-box {
  width: 90px; height: 24px; margin-left: 4px;
  background: #fff;
  border: 1px solid #aaa;
  border-radius: 3px;
  display: flex; align-items: center; justify-content: flex-end;
  padding-right: 3px;
  font-size: 12px;
}
.ps { color: #555; margin: 0 1px; font-size: 13px; }
.pt { color: #777; font-size: 10px; }
.s3 { margin-left: 6px; }
.nav-back { margin-left: 6px; }
.v-single { margin-left: 11px; }
.v-on {
  width: 27px; height: 25px; margin-left: 6px;
  background: linear-gradient(#fbe9bd, #f6d88f);
  border: 1px solid #a5905f;
  border-radius: 2px;
  display: flex; align-items: center; justify-content: center;
}
.v-two { margin-left: 3px; }
.v-four { margin-left: 3px; }
.combo-st { width: 80px; height: 25px; margin-left: 3px; }
.s4 { margin-left: 5px; }
.z-minus { margin-left: 6px; }
.slider { width: 100px; height: 1px; background: #777; margin-left: 5px; position: relative; }
.slider b { position: absolute; left: 35px; top: -12px; width: 7px; height: 25px; background: linear-gradient(90deg, #fff, #ddd); border: 1px solid #888; border-radius: 1px; }
.z-plus { margin-left: 6px; }
.z-page { margin-left: 7px; }
.z-car { margin-left: 12px; border-top-color: #999 !important; }

.mark {
  position: absolute;
  left: 824px; top: 608px;
  display: flex;
  pointer-events: none;
}
.mark-txt { display: flex; flex-direction: column; margin-left: -4px; white-space: nowrap; }
.mark-cn { font: 700 21.500px/26px "Noto Sans CJK SC", sans-serif; color: rgba(52, 135, 208, .9); letter-spacing: 0; }
.mark-en { font: 19.500px/20px "Noto Sans", sans-serif; color: rgba(66, 190, 120, .9); margin-left: -7px; margin-top: -1px; }
```
